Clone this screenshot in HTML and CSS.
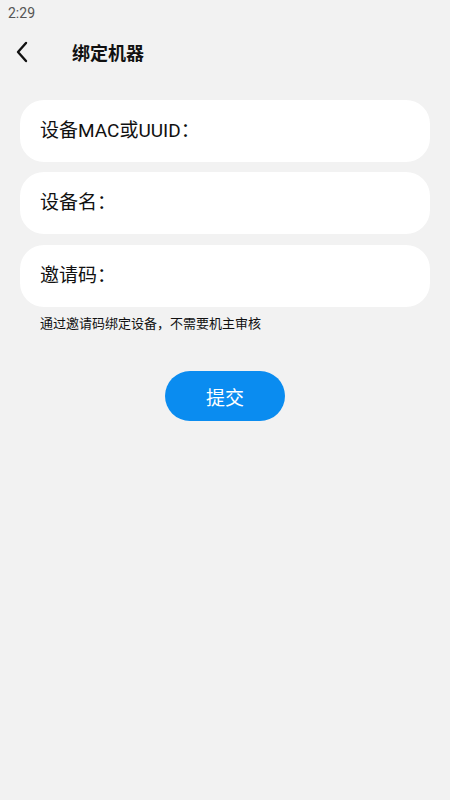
FILE: index.html
```html
<!DOCTYPE html>
<html lang="zh">

<head>
  <meta charset="UTF-8">
  <title>绑定机器</title>
  <link rel="stylesheet" href="styles.css">
</head>

<body>
  <div class="status-bar">2:29</div>

  <div class="header">
    <span class="back">
      <svg width="14" height="22" viewBox="0 0 14 22">
        <path d="M11 2 L3 11 L11 20" fill="none" stroke="#111" stroke-width="2.4" stroke-linecap="round" stroke-linejoin="round" />
      </svg>
    </span>
    <span class="title">绑定机器</span>
  </div>

  <div class="form">
    <div class="field">设备MAC或UUID：</div>
    <div class="field">设备名：</div>
    <div class="field">邀请码：</div>
    <p class="hint">通过邀请码绑定设备，不需要机主审核</p>
  </div>

  <div class="actions">
    <button class="submit">提交</button>
  </div>
</body>

</html>
```

FILE: styles.css
```css
html,
body {
  margin: 0;
  padding: 0;
  height: 100%;
}

body {
  background: #f2f2f2;
  font-family: Roboto, "Noto Sans CJK SC", sans-serif;
  color: #111;
}

.status-bar {
  height: 26px;
  padding-left: 8px;
  font-size: 14px;
  line-height: 26px;
  color: #555;
}

/* header */

.header {
  display: flex;
  align-items: center;
  height: 52px;
}

.back {
  display: flex;
  width: 14px;
  margin-left: 15px;
}

.title {
  margin-left: 43px;
  font-size: 18px;
  font-weight: bold;
}

/* form */

.form {
  display: flex;
  flex-direction: column;
  gap: 10px;
  padding: 22px 20px 0;
}

.field {
  height: 62px;
  padding-left: 20px;
  background: #fff;
  border-radius: 24px;
  font-size: 19px;
  line-height: 62px;
}

.field:nth-child(3) {
  margin-top: 1px;
}

.hint {
  margin: 0 0 0 20px;
  font-size: 13px;
  line-height: 14px;
}

.actions {
  display: flex;
  justify-content: center;
  padding-top: 40px;
}

.submit {
  width: 120px;
  height: 50px;
  border: 0;
  border-radius: 25px;
  background: #0a8cf0;
  color: #fff;
  font-family: inherit;
  font-size: 19px;
}
```
